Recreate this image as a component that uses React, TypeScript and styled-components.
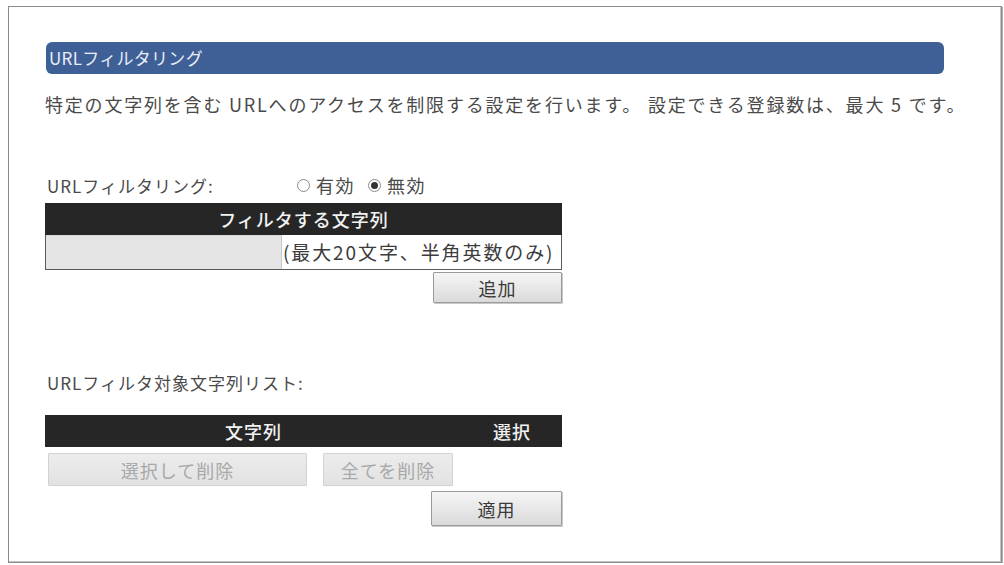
import React from "react";
import styled, { createGlobalStyle } from "styled-components";

const Global = createGlobalStyle`
  html, body { margin: 0; padding: 0; background: #ffffff; }
  body { font-family: "Noto Sans CJK JP", "Noto Sans", sans-serif; color: #4a4a4a; }
`;

const Frame = styled.div`
  box-sizing: border-box;
  margin: 6px 2px 0 8px;
  width: 994px;
  height: 557px;
  border: 1px solid #8c8c8c;
  box-shadow: inset -1px -1px 0 #c4c4c4, 1px 1px 0 #b0b0b0;
  padding: 35px 0 0 36px;
  display: flex;
  flex-direction: column;
  align-items: flex-start;
`;

const TitleBar = styled.div`
  box-sizing: border-box;
  margin-left: 1px;
  width: 898px;
  height: 32px;
  border-radius: 6px;
  background: #3f5f97;
  color: #e9eef8;
  font-size: 17px;
  line-height: 32px;
  padding-left: 3px;
  letter-spacing: 0.3px;
`;

const Description = styled.p`
  margin: 18px 0 0 0;
  font-size: 18px;
  line-height: 24px;
  letter-spacing: 1.8px;
  white-space: nowrap;
`;

const SettingRow = styled.div`
  margin-top: 57px;
  display: flex;
  align-items: center;
  height: 24px;
  font-size: 17px;
  padding-left: 2px;
`;

const SettingLabel = styled.span`
  width: 250px;
  letter-spacing: 1px;
`;

const RadioGroup = styled.div`
  display: flex;
  align-items: center;
  gap: 13px;
`;

const RadioOption = styled.label`
  display: flex;
  align-items: center;
  gap: 6px;
  font-size: 18px;
  letter-spacing: 1.5px;
`;

const RadioCircle = styled.span<{ $checked?: boolean }>`
  box-sizing: border-box;
  width: 13px;
  height: 13px;
  border-radius: 50%;
  border: 1px solid #8a8a8a;
  background: #fff;
  display: flex;
  align-items: center;
  justify-content: center;
  &::after {
    content: "";
    width: 7px;
    height: 7px;
    border-radius: 50%;
    background: ${(p) => (p.$checked ? "#333" : "transparent")};
  }
`;

const Section = styled.div<{ $top: number }>`
  margin-top: ${(p) => p.$top}px;
  width: 517px;
  display: flex;
  flex-direction: column;
`;

const HeaderBar = styled.div`
  box-sizing: border-box;
  height: 32px;
  background: #262626;
  color: #f2f2f2;
  font-size: 18px;
  font-weight: 500;
  display: flex;
  align-items: center;
  letter-spacing: 1px;
`;

const HeaderCell = styled.div<{ $width?: number }>`
  ${(p) => (p.$width ? `width: ${p.$width}px;` : "flex: 1;")}
  text-align: center;
`;

const InputRow = styled.div`
  box-sizing: border-box;
  height: 35px;
  display: flex;
  border: 1px solid #5a5a5a;
  border-top: none;
`;

const GrayInput = styled.div`
  box-sizing: border-box;
  width: 236px;
  background: #e5e5e5;
  border-right: 1px solid #c8c8c8;
  border-top: 1px solid #d8d8d8;
`;

const Hint = styled.div`
  flex: 1;
  background: #fff;
  font-size: 19px;
  line-height: 33px;
  padding-left: 1px;
  letter-spacing: 1.9px;
  color: #3c3c3c;
  white-space: nowrap;
`;

const ButtonRow = styled.div<{ $top: number; $justify?: string }>`
  margin-top: ${(p) => p.$top}px;
  display: flex;
  justify-content: ${(p) => p.$justify || "flex-end"};
  gap: 16px;
`;

const Button = styled.button<{ $width: number; $height: number; $disabled?: boolean; $indent?: number }>`
  box-sizing: border-box;
  width: ${(p) => p.$width}px;
  height: ${(p) => p.$height}px;
  margin-left: ${(p) => p.$indent || 0}px;
  border: 1px solid ${(p) => (p.$disabled ? "#d2d2d2" : "#9a9a9a")};
  border-radius: 1px;
  background: ${(p) =>
    p.$disabled ? "linear-gradient(#ececec, #e2e2e2)" : "linear-gradient(#f6f6f6, #dadada)"};
  color: ${(p) => (p.$disabled ? "#a8a8a8" : "#3a3a3a")};
  font-family: "Noto Sans CJK JP", "Noto Sans", sans-serif;
  font-size: 18px;
  letter-spacing: 1px;
  padding: 0;
  box-shadow: ${(p) => (p.$disabled ? "none" : "1px 1px 0 #c8c8c8")};
`;

const ListLabel = styled.div`
  margin-top: 68px;
  height: 24px;
  line-height: 24px;
  font-size: 17px;
  padding-left: 2px;
  letter-spacing: 1px;
`;

export default function App() {
  return (
    <>
      <Global />
      <Frame>
        <TitleBar>URLフィルタリング</TitleBar>
        <Description>
          特定の文字列を含む URLへのアクセスを制限する設定を行います。 設定できる登録数は、最大 5 です。
        </Description>
        <SettingRow>
          <SettingLabel>URLフィルタリング:</SettingLabel>
          <RadioGroup>
            <RadioOption>
              <RadioCircle />
              有効
            </RadioOption>
            <RadioOption>
              <RadioCircle $checked />
              無効
            </RadioOption>
          </RadioGroup>
        </SettingRow>
        <Section $top={6}>
          <HeaderBar>
            <HeaderCell>フィルタする文字列</HeaderCell>
          </HeaderBar>
          <InputRow>
            <GrayInput />
            <Hint>(最大20文字、半角英数のみ)</Hint>
          </InputRow>
          <ButtonRow $top={2}>
            <Button $width={129} $height={31}>追加</Button>
          </ButtonRow>
        </Section>
        <ListLabel>URLフィルタ対象文字列リスト:</ListLabel>
        <Section $top={20}>
          <HeaderBar>
            <HeaderCell>文字列</HeaderCell>
            <HeaderCell $width={100}>選択</HeaderCell>
          </HeaderBar>
          <ButtonRow $top={6} $justify="flex-start">
            <Button $width={259} $height={33} $disabled $indent={3}>
              選択して削除
            </Button>
            <Button $width={130} $height={33} $disabled>
              全てを削除
            </Button>
          </ButtonRow>
          <ButtonRow $top={5}>
            <Button $width={131} $height={35}>適用</Button>
          </ButtonRow>
        </Section>
      </Frame>
    </>
  );
}
